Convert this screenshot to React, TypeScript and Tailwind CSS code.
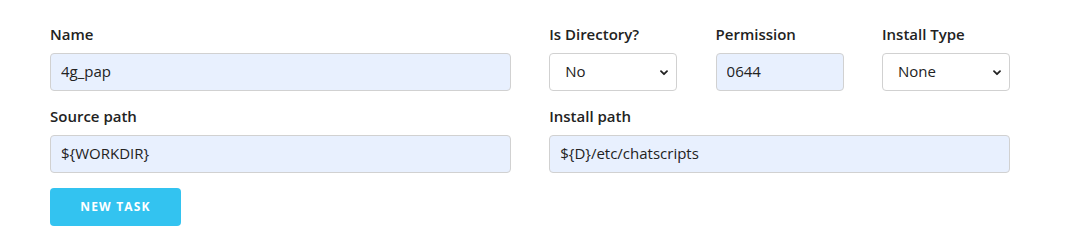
import React from "react";

const font = { fontFamily: '"Open Sans", "Liberation Sans", sans-serif' };

function Label({ children }: { children: React.ReactNode }) {
  return (
    <label className="block mb-[7px] h-[22px] leading-[20px] text-[15px] font-semibold text-[#222]">
      {children}
    </label>
  );
}

function TextField({ value }: { value: string }) {
  return (
    <input
      readOnly
      value={value}
      className="block w-full h-[38px] px-[10px] pt-[5px] pb-[7px] border border-[#D1D1D1] rounded-[4px] bg-[#e8f0fe] text-[15px] text-[#222] outline-none"
      style={font}
    />
  );
}

function SelectField({ value }: { value: string }) {
  return (
    <div className="relative w-full h-[38px] border border-[#D1D1D1] rounded-[4px] bg-white flex items-center pl-[15px] pb-[2px] text-[15px] text-[#222]">
      <span>{value}</span>
      <svg
        className="absolute right-[8px] top-[16px]"
        width="8"
        height="6"
        viewBox="0 0 8 6"
        fill="none"
      >
        <path d="M1 1.2 L4 4.2 L7 1.2" stroke="#222" strokeWidth="1.8" strokeLinecap="round" strokeLinejoin="round" />
      </svg>
    </div>
  );
}

export default function App() {
  return (
    <div className="bg-white w-[1076px] h-[235px] pl-[50px] pt-[24px]" style={font}>
      <div className="w-[960px]">
        <div className="flex gap-[38.4px] mb-[15px]">
          <div className="w-[460.8px]">
            <Label>Name</Label>
            <TextField value="4g_pap" />
          </div>
          <div className="w-[128px]">
            <Label>Is Directory?</Label>
            <SelectField value="No" />
          </div>
          <div className="w-[128px]">
            <Label>Permission</Label>
            <TextField value="0644" />
          </div>
          <div className="w-[128px]">
            <Label>Install Type</Label>
            <SelectField value="None" />
          </div>
        </div>
        <div className="flex gap-[38.4px] mb-[15px]">
          <div className="w-[460.8px]">
            <Label>Source path</Label>
            <TextField value="${WORKDIR}" />
          </div>
          <div className="w-[460.8px]">
            <Label>Install path</Label>
            <TextField value="${D}/etc/chatscripts" />
          </div>
        </div>
        <button className="h-[38px] w-[131px] rounded-[4px] bg-[#33C3F0] text-white text-[12px] font-bold tracking-[1.2px] uppercase leading-[38px]">
          New Task
        </button>
      </div>
    </div>
  );
}
